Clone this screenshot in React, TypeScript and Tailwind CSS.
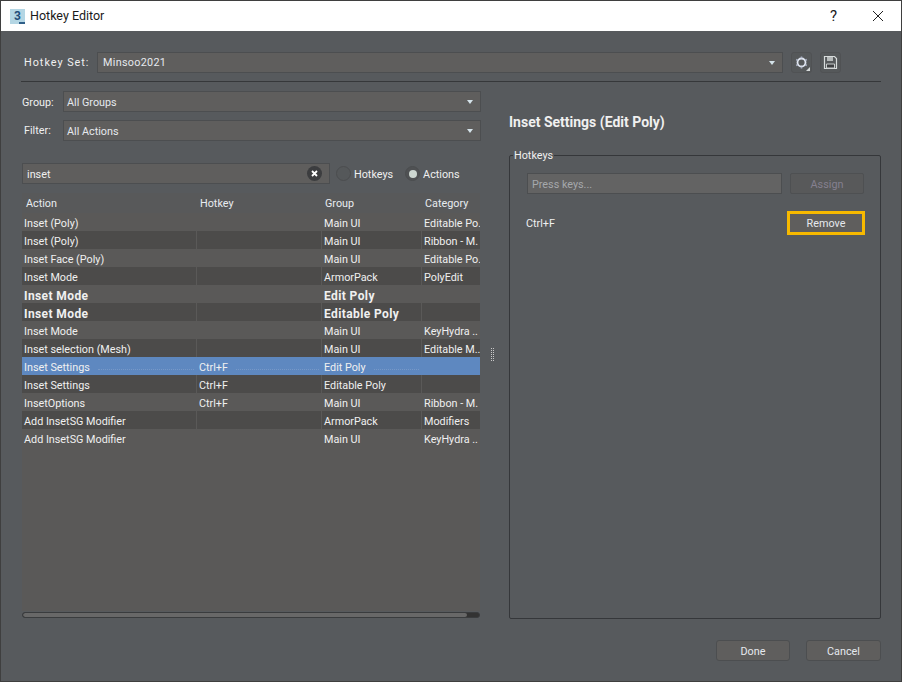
import React from 'react';

const font = { fontFamily: 'Roboto, "Noto Sans", sans-serif' };

type Row = { a: string; h?: string; g: string; c?: string; bold?: boolean; sel?: boolean };
const rows: Row[] = [
  { a: 'Inset (Poly)', g: 'Main UI', c: 'Editable Po.' },
  { a: 'Inset (Poly)', g: 'Main UI', c: 'Ribbon - M.' },
  { a: 'Inset Face (Poly)', g: 'Main UI', c: 'Editable Po.' },
  { a: 'Inset Mode', g: 'ArmorPack', c: 'PolyEdit' },
  { a: 'Inset Mode', g: 'Edit Poly', bold: true },
  { a: 'Inset Mode', g: 'Editable Poly', bold: true },
  { a: 'Inset Mode', g: 'Main UI', c: 'KeyHydra ..' },
  { a: 'Inset selection (Mesh)', g: 'Main UI', c: 'Editable M..' },
  { a: 'Inset Settings', h: 'Ctrl+F', g: 'Edit Poly', sel: true },
  { a: 'Inset Settings', h: 'Ctrl+F', g: 'Editable Poly' },
  { a: 'InsetOptions', h: 'Ctrl+F', g: 'Main UI', c: 'Ribbon - M.' },
  { a: 'Add InsetSG Modifier', g: 'ArmorPack', c: 'Modifiers' },
  { a: 'Add InsetSG Modifier', g: 'Main UI', c: 'KeyHydra ..' },
];

function Caret() {
  return (
    <svg width="6" height="4" viewBox="0 0 6 4" className="shrink-0">
      <path d="M0 0H6L3 4Z" fill="#d5e3ea" />
    </svg>
  );
}

function Combo({ text, className, textClass = 'pt-[2px]' }: { text: string; className: string; textClass?: string }) {
  return (
    <div className={`flex h-[21px] items-center justify-between border border-[#4c4e50] bg-[#5f5e5d] pr-[7px] text-[#e6e9ee] ${className}`}>
      <span className={textClass}>{text}</span>
      <Caret />
    </div>
  );
}

function Radio({ on }: { on?: boolean }) {
  return (
    <div className={`flex h-[15px] w-[15px] items-center justify-center rounded-full border border-[#4b4d4f] ${on ? 'bg-[#4f5153]' : 'bg-[#55585a]'}`}>
      {on && <div className="h-[8px] w-[8px] rounded-full bg-[#ccd6d0]" />}
    </div>
  );
}

function Dots() {
  return <span className="mb-[5px] ml-[8px] mr-[2px] flex-1 self-end border-b border-dotted border-[#7698c8]" />;
}

export default function App() {
  return (
    <div style={font} className="flex h-[682px] w-[902px] flex-col overflow-hidden border border-[#3f3f3f] bg-[#575a5d] text-[10.8px] leading-[18px] text-[#f0f0f0]">
      <div className="flex h-[30px] shrink-0 items-center bg-white pl-[9px] text-[12px] text-[#1a1a1a]">
        <div className="relative flex h-[15px] w-[15px] items-center justify-center bg-[#b4d6e4] text-[12px] font-bold leading-none text-[#1f4d78]">
          3
          <span className="absolute bottom-0 right-0 h-[2px] w-[6px] bg-[#2f5f88]" />
        </div>
        <span className="ml-[5px] text-[12.5px]">Hotkey Editor</span>
        <span className="ml-auto text-[15px]">?</span>
        <svg width="12" height="12" viewBox="0 0 12 12" className="ml-[35px] mr-[17px]">
          <path d="M1 1L11 11M11 1L1 11" stroke="#222" strokeWidth="1" fill="none" />
        </svg>
      </div>

      <div className="flex min-h-0 flex-1 flex-col pl-[20px] pr-[20px]">
        <div className="mt-[21px] flex items-center pl-[3px]">
          <span className="w-[73px] tracking-[1px]">Hotkey Set:</span>
          <Combo text="Minsoo2021" className="w-[686px] pl-[5px] tracking-[0.3px]" textClass="" />
          <div className="relative ml-[8px] flex h-[21px] w-[21px] items-center justify-center rounded-[3px] border border-[#505254] bg-[#55585a]">
            <svg width="15" height="15" viewBox="0 0 15 15" fill="none">
              <circle cx="7.5" cy="7.5" r="4" stroke="#dfe5f0" strokeWidth="1.8" />
              <path d="M7.5 1.5V3.2M7.5 11.8V13.5M2.2 4.5L3.6 5.3M11.4 9.7L12.8 10.5M2.2 10.5L3.6 9.7M11.4 5.3L12.8 4.5" stroke="#a9b0c2" strokeWidth="1.6" />
            </svg>
            <svg width="4" height="4" viewBox="0 0 4 4" className="absolute bottom-[1px] right-[1px]"><path d="M4 0V4H0Z" fill="#d8dcdc" /></svg>
          </div>
          <div className="ml-[8px] flex h-[21px] w-[21px] items-center justify-center rounded-[3px] border border-[#505254] bg-[#55585a]">
            <svg width="15" height="15" viewBox="0 0 15 15" fill="none">
              <path d="M1.5 1.5H11.5L13.5 3.5V13.5H1.5Z" stroke="#d8dcdc" strokeWidth="1.2" />
              <path d="M4 2H10V6H4Z" fill="#b6baba" />
              <path d="M3.5 9H11.5V13H3.5Z" fill="#3d3f41" stroke="#c8cccc" />
            </svg>
          </div>
        </div>
        <div className="mt-[8px] h-px w-[860px] shrink-0 bg-[#36383a]" />

        <div className="flex min-h-0 flex-1">
          <div className="flex w-[460px] flex-col pl-px">
            <div className="mt-[9px] flex items-center">
              <span className="w-[41px] shrink-0 pt-[2px]">Group:</span>
              <Combo text="All Groups" className="w-[419px] pl-[3px]" />
            </div>
            <div className="mt-[8px] flex items-center">
              <span className="w-[41px] shrink-0 pl-[2px]">Filter:</span>
              <Combo text="All Actions" className="w-[419px] pl-[3px]" />
            </div>
            <div className="mt-[22px] flex items-center">
              <div className="flex h-[21px] w-[308px] items-center justify-between border border-[#4c4e50] bg-[#5f5e5d] pl-[4px] pr-[7px]">
                <span className="pt-[2px]">inset</span>
                <div className="flex h-[15px] w-[15px] items-center justify-center rounded-full bg-[#3c3d3f]">
                  <svg width="7" height="7" viewBox="0 0 7 7"><path d="M1 1L6 6M6 1L1 6" stroke="#fff" strokeWidth="1.8" /></svg>
                </div>
              </div>
              <div className="ml-[6px]"><Radio /></div>
              <span className="ml-[3px] pt-[2px]">Hotkeys</span>
              <div className="ml-[12px]"><Radio on /></div>
              <span className="ml-[3px] pt-[2px]">Actions</span>
            </div>

            <div className="mt-[9px] flex min-h-0 w-[458px] flex-1 flex-col bg-[#5a5958]">
              <div className="grid h-[20px] shrink-0 grid-cols-[174px_125px_100px_59px] items-center bg-[#58595a] pt-[2px] text-[#e8ecf0]">
                <span className="pl-[4px]">Action</span>
                <span className="pl-[4px]">Hotkey</span>
                <span className="pl-[4px]">Group</span>
                <span className="pl-[4px]">Category</span>
              </div>
              {rows.map((r, i) => {
                const bg = r.sel ? 'bg-[#5e88c0]' : i % 2 === 0 ? 'bg-[#5a5958]' : 'bg-[#4c4b4a]';
                const sep = i % 2 === 0 ? 'pl-[3px]' : 'border-l border-[#5a5958] pl-[2px]';
                const txt = r.bold ? 'text-[12px] font-bold tracking-[0.4px]' : '';
                return (
                  <div key={i} className={`grid h-[18px] shrink-0 grid-cols-[174px_125px_100px_59px] whitespace-nowrap leading-[14px] ${bg}`}>
                    <span className={`flex pl-[2px] pt-[4px] ${txt}`}>
                      {r.a}
                      {r.sel && <Dots />}
                    </span>
                    <span className={`flex pt-[4px] ${sep}`}>
                      {r.h}
                      {r.sel && <Dots />}
                    </span>
                    <span className={`flex pt-[4px] ${sep} ${txt}`}>
                      {r.g}
                      {r.sel && <Dots />}
                    </span>
                    <span className={`overflow-hidden pt-[4px] ${sep}`}>{r.c}</span>
                  </div>
                );
              })}
            </div>
            <div className="mt-[1px] mb-[2px] flex h-[6px] w-[458px] shrink-0 overflow-hidden rounded-full border border-[#3a3c3e] bg-[#333]">
              <div className="h-full w-[444px] rounded-full bg-[#686868]" />
            </div>
          </div>

          <div className="relative ml-[11px] mt-[9px] mb-[2px] w-px bg-[#6a6d70]">
            <div className="absolute left-[-1px] top-[257px] h-[13px] w-[3px] border-x border-dotted border-[#c8c8c8] bg-[#575a5d]" />
          </div>

          <div className="ml-[17px] flex min-h-0 w-[372px] flex-col">
            <div className="mt-[31px] text-[14px] font-bold">Inset Settings (Edit Poly)</div>
            <div className="relative mt-[24px] mb-[1px] flex-1 rounded-[2px] border border-[#35373a] pl-[17px] pr-[16px]">
              <span className="absolute left-[3px] top-[-7px] bg-[#575a5d] px-px leading-[14px]">Hotkeys</span>
              <div className="mt-[17px] flex">
                <div className="flex h-[21px] w-[255px] items-center border border-[#4c4e50] bg-[#636363] pl-[4px] pt-[2px] text-[#a5a8ac]">Press keys...</div>
                <div className="ml-[8px] flex h-[21px] w-[74px] items-center justify-center rounded-[2px] border border-[#4e5052] bg-[#58595a] pt-[2px] text-[#85808f]">Assign</div>
              </div>
              <div className="mt-[17px] flex items-center justify-between">
                <span className="ml-[-1px] pt-[2px]">Ctrl+F</span>
                <div className="mr-[-1px] flex h-[24px] w-[78px] items-center justify-center border-[3px] border-[#f7b900] bg-[#5f5e5d] pt-[1px] text-[#e6e9ee]">Remove</div>
              </div>
            </div>
          </div>
        </div>

        <div className="flex h-[61px] shrink-0 items-start justify-end pt-[20px]">
          <div className="flex h-[21px] w-[74px] items-center justify-center rounded-[3px] border border-[#4c4e50] bg-[#5f5e5d] pt-[2px] text-[#e6e9ee]">Done</div>
          <div className="ml-[16px] flex h-[21px] w-[75px] items-center justify-center rounded-[3px] border border-[#4c4e50] bg-[#5f5e5d] pt-[2px] text-[#e6e9ee]">Cancel</div>
        </div>
      </div>
    </div>
  );
}
